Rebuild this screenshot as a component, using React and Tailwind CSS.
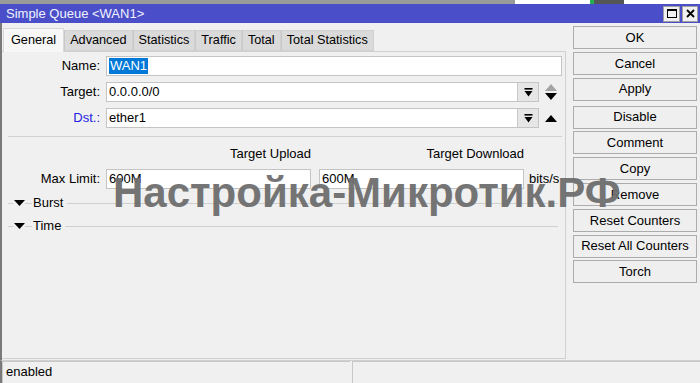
import React from 'react';

// Кнопки справа
const actions = [
  ['OK', 'Cancel', 'Apply'],
  ['Disable', 'Comment', 'Copy', 'Remove', 'Reset Counters', 'Reset All Counters', 'Torch'],
];

const tabs = ['General', 'Advanced', 'Statistics', 'Traffic', 'Total', 'Total Statistics'];

function DropIcon() {
  return (
    <svg width="9" height="9" viewBox="0 0 9 9">
      <rect x="0.5" y="0" width="8" height="1.6" fill="#000" />
      <polygon points="0.5,3 8.5,3 4.5,8.5" fill="#000" />
    </svg>
  );
}

function Tri({ up, color = '#000' }) {
  return (
    <svg width="12" height="7" viewBox="0 0 12 7">
      <polygon points={up ? '0,7 12,7 6,0' : '0,0 12,0 6,7'} fill={color} />
    </svg>
  );
}

function Field({ children, className = '' }) {
  return (
    <div className={`h-[20px] bg-white border border-[#c4c4c4] flex items-center pl-[2px] ${className}`}>
      {children}
    </div>
  );
}

function SelectField({ value }) {
  return (
    <div className="flex-1 h-[20px] bg-white border border-[#c4c4c4] flex items-center">
      <span className="flex-1 pl-[2px]">{value}</span>
      <div className="w-[21px] h-full bg-[#e6e6e6] border-l border-[#c8c8c8] flex items-center justify-center">
        <DropIcon />
      </div>
    </div>
  );
}

function Section({ title }) {
  return (
    <div className="flex items-center h-[20px] pr-[4px]">
      <div className="w-[5px] h-px bg-[#d0d0d0] ml-[6px]" />
      <div className="w-[12px] flex justify-center">
        <svg width="11" height="6" viewBox="0 0 11 6">
          <polygon points="0,0 11,0 5.5,6" fill="#000" />
        </svg>
      </div>
      <div className="w-[7px] h-px bg-[#d0d0d0]" />
      <span className="px-[1px]">{title}</span>
      <div className="flex-1 h-px bg-[#d0d0d0] ml-[3px]" />
    </div>
  );
}

export default function App() {
  return (
    <div className="w-[700px] h-[383px] overflow-hidden bg-[#f0f0f0] text-[13px] text-black font-['Liberation_Sans',Arial,sans-serif] flex flex-col relative">
      {/* кусок окна сзади */}
      <div className="h-[4px] flex">
        <div className="w-[515px] bg-[#9a9a9a]" />
        <div className="flex-1 bg-white flex">
          <div className="w-[75px]" />
          <div className="w-[4px] bg-[#22b14c]" />
          <div className="w-[30px] bg-[#555]" />
        </div>
      </div>

      {/* заголовок */}
      <div className="h-[19px] bg-[#4a4fc9] flex items-center justify-between pl-[6px] pr-[2px]">
        <span className="text-[13px] text-[#f2f2ff]">Simple Queue &lt;WAN1&gt;</span>
        <div className="flex gap-[2px]">
          <div className="w-[17px] h-[16px] bg-[#f0f0f0] border border-[#a0a0a0] flex items-center justify-center">
            <div className="w-[10px] h-[9px] border border-black border-t-2" />
          </div>
          <div className="w-[16px] h-[16px] bg-[#f0f0f0] border border-[#a0a0a0] flex items-center justify-center">
            <svg width="9" height="9" viewBox="0 0 9 9">
              <path d="M1 1 L8 8 M8 1 L1 8" stroke="#000" strokeWidth="1.8" />
            </svg>
          </div>
        </div>
      </div>

      <div className="flex-1 flex border-l-2 border-[#7a7a7a]">
        {/* левая часть: вкладки и панель */}
        <div className="w-[564px] flex flex-col">
          <div className="h-[28px] flex items-end pl-[1px]">
            {tabs.map((t, i) =>
              i === 0 ? (
                <div key={t} className="h-[24px] px-[7px] bg-[#f7f7f7] border border-b-0 border-[#d9d9d9] flex items-center text-[12.7px] mb-[-1px] relative z-10">
                  {t}
                </div>
              ) : (
                <div key={t} className="h-[21px] px-[5px] bg-[#dadada] border border-[#d0d0d0] border-l-[#c8c8c8] flex items-center text-[12.7px]">
                  {t}
                </div>
              )
            )}
          </div>
          <div className="flex-1 border border-l-0 border-[#d0d0d0] mb-[1px] flex flex-col pt-[4px] pr-[3px]">
            <div className="flex items-center gap-[6px]">
              <span className="w-[98px] text-right">Name:</span>
              <Field className="flex-1">
                <span className="bg-[#0078d7] text-white px-[1px] leading-[16px]">WAN1</span>
              </Field>
            </div>
            <div className="flex items-center gap-[6px] mt-[6px]">
              <span className="w-[98px] text-right">Target:</span>
              <SelectField value="0.0.0.0/0" />
              <div className="w-[17px] flex flex-col items-start gap-[2px]">
                <Tri up color="#a4a4a4" />
                <Tri />
              </div>
            </div>
            <div className="flex items-center gap-[6px] mt-[6px]">
              <span className="w-[98px] text-right text-[#2222e0]">Dst.:</span>
              <SelectField value="ether1" />
              <div className="w-[17px] flex items-center">
                <Tri up />
              </div>
            </div>
            <div className="h-px bg-[#d2d2d2] ml-[6px] mt-[8px]" />
            <div className="flex mt-[9px] h-[16px] items-center">
              <span className="w-[104px]" />
              <span className="w-[205px] text-right">Target Upload</span>
              <span className="w-[8px]" />
              <span className="w-[205px] text-right">Target Download</span>
            </div>
            <div className="flex items-center mt-[7px]">
              <span className="w-[98px] text-right">Max Limit:</span>
              <span className="w-[6px]" />
              <Field className="w-[205px]">600M</Field>
              <span className="w-[8px]" />
              <Field className="w-[205px]">600M</Field>
              <span className="pl-[5px]">bits/s</span>
            </div>
            <div className="mt-[4px]">
              <Section title="Burst" />
            </div>
            <div className="mt-[3px]">
              <Section title="Time" />
            </div>
          </div>
        </div>

        {/* кнопки справа */}
        <div className="flex-1 pl-[7px] pr-[3px] pt-[3px] flex flex-col gap-[5px]">
          {actions.map((group, gi) => (
            <div key={gi} className="flex flex-col gap-[2.8px]">
              {group.map((b) => (
                <div key={b} className="h-[23px] bg-[#efefef] border border-[#acacac] flex items-center justify-center">
                  {b}
                </div>
              ))}
            </div>
          ))}
        </div>
      </div>

      {/* статус */}
      <div className="h-[23px] flex border-t border-[#cfcfcf] border-l-2 border-l-[#7a7a7a]">
        <div className="w-[348px] border-l border-t border-[#c8c8c8] flex items-center pl-[3px] pb-[2px]">enabled</div>
        <div className="flex-1 border-l border-t border-[#c8c8c8] ml-[2px]" />
      </div>

      {/* водяной знак */}
      <div className="absolute left-[113px] top-[172px] text-[42px] font-bold leading-none text-[#6e6e6e] opacity-95 whitespace-nowrap pointer-events-none">
        Настройка-Микротик.РФ
      </div>
    </div>
  );
}
